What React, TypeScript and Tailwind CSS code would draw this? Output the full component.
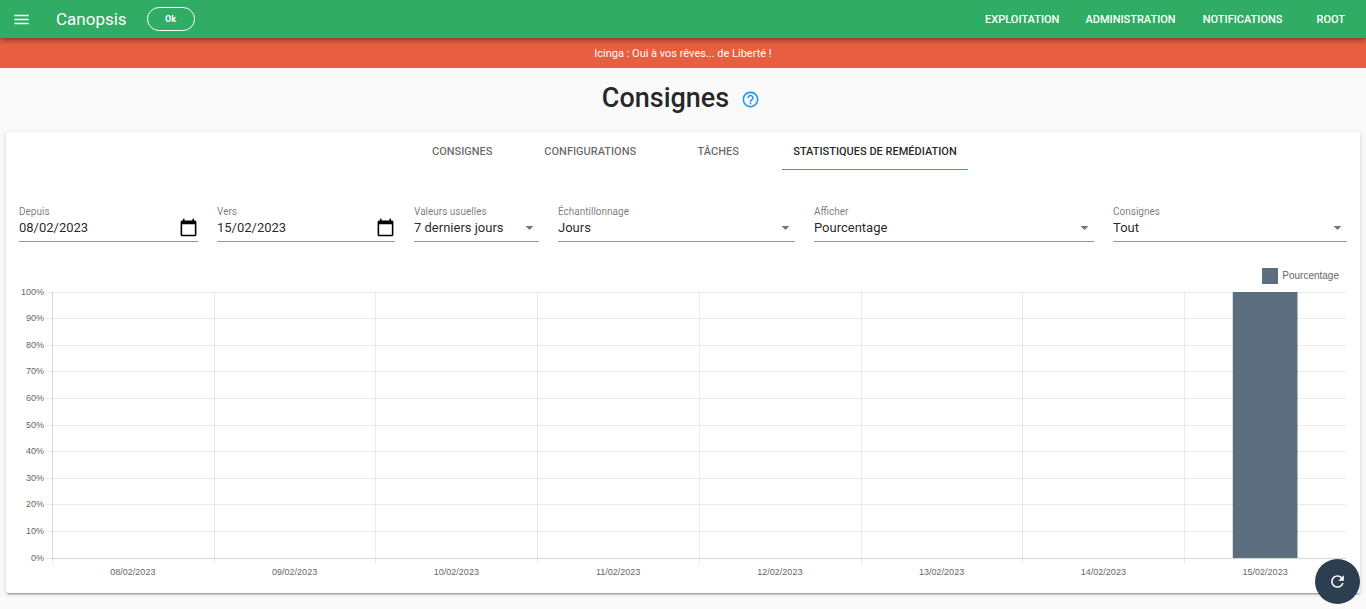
import { useLayoutEffect, useRef, useState } from "react";
import { MdArrowDropDown, MdCalendarToday, MdHelpOutline, MdMenu, MdRefresh } from "react-icons/md";

const NAV = [
  { label: "Exploitation", href: "#exploitation", className: "mr-[26px]" },
  { label: "Administration", href: "#administration", className: "mr-[27px]" },
  { label: "Notifications", href: "#notifications", className: "mr-[34px]" },
  { label: "Root", href: "#root", className: "mr-[21px]" },
];

const TABS = ["Consignes", "Configurations", "Tâches", "Statistiques de remédiation"];

const DATA = [
  { day: "08/02/2023", value: 0 },
  { day: "09/02/2023", value: 0 },
  { day: "10/02/2023", value: 0 },
  { day: "11/02/2023", value: 0 },
  { day: "12/02/2023", value: 0 },
  { day: "13/02/2023", value: 0 },
  { day: "14/02/2023", value: 0 },
  { day: "15/02/2023", value: 100 },
];

const LABEL = "text-[10px] leading-3 text-black/54";
const CONTROL =
  "h-5 w-full appearance-none bg-transparent text-[13px] leading-5 text-black/87 outline-none";

function DateField({ id, label, value }: { id: string; label: string; value: string }) {
  return (
    <div className="flex min-w-0 flex-col border-b border-[#949494] pb-[3px]">
      <label htmlFor={id} className={LABEL}>
        {label}
      </label>
      <div className="flex h-5 items-start">
        <input id={id} type="text" defaultValue={value} className={CONTROL} />
        <button type="button" aria-label={`Choisir : ${label}`} className="shrink-0 text-black">
          <MdCalendarToday className="size-[19px]" />
        </button>
      </div>
    </div>
  );
}

function SelectField({ id, label, options }: { id: string; label: string; options: string[] }) {
  return (
    <div className="flex min-w-0 flex-col border-b border-[#949494] pb-[3px]">
      <label htmlFor={id} className={LABEL}>
        {label}
      </label>
      <div className="grid items-start">
        <select id={id} className={`${CONTROL} col-start-1 row-start-1`}>
          {options.map((o) => (
            <option key={o}>{o}</option>
          ))}
        </select>
        <MdArrowDropDown className="pointer-events-none col-start-1 row-start-1 size-[19px] justify-self-end text-black/54" />
      </div>
    </div>
  );
}

function Chart() {
  const ref = useRef<HTMLDivElement>(null);
  const [width, setWidth] = useState(1328);

  useLayoutEffect(() => {
    const el = ref.current;
    if (!el) return;
    const update = () => setWidth(el.clientWidth);
    update();
    const observer = new ResizeObserver(update);
    observer.observe(el);
    return () => observer.disconnect();
  }, []);

  const left = 33;
  const right = width - 1;
  const top = 5;
  const bottom = 271;
  const step = (right - left) / DATA.length;
  const ticks = Array.from({ length: 11 }, (_, i) => 100 - i * 10);

  return (
    <div ref={ref} className="w-full">
      <svg
        width={width}
        height={294}
        role="img"
        aria-label="Pourcentage"
        className="block font-['Liberation_Sans',Arial,sans-serif] text-[9px]"
      >
        {ticks.map((t) => {
          const y = Math.floor(bottom - ((bottom - top) * t) / 100);
          return (
            <g key={t}>
              <rect
                x={left - 6}
                y={y}
                width={right - left + 6}
                height={1}
                fill="#000000"
                fillOpacity={0.08}
              />
              <text x={left - 8} y={y + 3} textAnchor="end" fill="#666666">
                {t}%
              </text>
            </g>
          );
        })}
        {Array.from({ length: DATA.length }, (_, i) => (
          <rect
            key={i}
            x={Math.ceil(left + i * step - 0.5)}
            y={top}
            width={1}
            height={bottom - top + 6}
            fill="#000000"
            fillOpacity={0.08}
          />
        ))}
        <rect x={left} y={top} width={1} height={bottom - top} fill="#000000" fillOpacity={0.08} />
        <rect x={left} y={bottom} width={right - left} height={1} fill="#000000" fillOpacity={0.08} />
        {DATA.map((d, i) => {
          const h = ((bottom - top) * d.value) / 100;
          return (
            <g key={d.day}>
              {h > 0 && (
                <rect
                  x={left + (i + 0.3) * step}
                  y={bottom - h}
                  width={step * 0.4}
                  height={h}
                  fill="#5c6d7e"
                />
              )}
              <text x={left + (i + 0.5) * step} y={288} textAnchor="middle" fill="#666666">
                {d.day}
              </text>
            </g>
          );
        })}
      </svg>
    </div>
  );
}

export default function App() {
  const [tab, setTab] = useState(3);

  return (
    <div className="flex min-h-screen flex-col bg-[#fafafa] font-[Roboto,sans-serif] text-black/87">
      <header className="relative z-10 flex h-[38px] items-center bg-[#30ac64] text-white shadow-[0_2px_4px_-1px_rgba(0,0,0,0.3),0_3px_5px_rgba(0,0,0,0.2)]">
        <button type="button" aria-label="Menu" className="ml-3">
          <MdMenu className="size-[19px]" />
        </button>
        <a href="#accueil" className="ml-[25px] text-[17px] leading-6">
          Canopsis
        </a>
        <button
          type="button"
          className="ml-5 h-6 w-12 rounded-full border border-white pt-px text-[9px] font-bold"
        >
          Ok
        </button>
        <nav className="ml-auto flex items-center pt-px">
          {NAV.map((n) => (
            <a
              key={n.label}
              href={n.href}
              className={`text-[11px] leading-4 font-medium uppercase ${n.className}`}
            >
              {n.label}
            </a>
          ))}
        </nav>
      </header>

      <p className="flex h-[30px] items-center justify-center bg-[#e85e40] pt-px text-[11px] leading-4 text-white">
        Icinga : Oui à vos rêves... de Liberté !
      </p>

      <div className="flex h-16 items-center justify-center gap-3 pr-1 pb-1">
        <h1 className="text-[27px] leading-9 font-medium">Consignes</h1>
        <button type="button" aria-label="Aide" className="mt-[3px] text-[#2196f3]">
          <MdHelpOutline className="size-[19px]" />
        </button>
      </div>

      <main className="mx-[6px] mb-4 rounded-xs bg-white px-[13px] pb-3 shadow-[0_3px_1px_-2px_rgba(0,0,0,0.2),0_2px_2px_rgba(0,0,0,0.14),0_1px_5px_rgba(0,0,0,0.12)]">
        <div role="tablist" className="flex h-[38px] justify-center">
          {TABS.map((t, i) => (
            <button
              key={t}
              type="button"
              role="tab"
              aria-selected={i === tab}
              onClick={() => setTab(i)}
              className={`min-w-32 border-b px-[11px] pt-[3px] text-[11px] font-medium uppercase ${
                i === tab ? "border-[#2fab63] text-black/87" : "border-transparent text-black/60"
              }`}
            >
              {t}
            </button>
          ))}
        </div>

        <form className="mt-9 grid grid-cols-[179fr_178fr_125fr_237fr_280fr_234fr] gap-[19px]">
          <DateField id="from" label="Depuis" value="08/02/2023" />
          <DateField id="to" label="Vers" value="15/02/2023" />
          <SelectField id="range" label="Valeurs usuelles" options={["7 derniers jours"]} />
          <SelectField id="sampling" label="Échantillonnage" options={["Jours"]} />
          <SelectField id="show" label="Afficher" options={["Pourcentage"]} />
          <SelectField id="instructions" label="Consignes" options={["Tout"]} />
        </form>

        <div className="mt-[26px] mr-2 flex h-4 items-center justify-end gap-1">
          <span className="size-4 bg-[#5c6d7e]" />
          <span className="font-['Liberation_Sans',Arial,sans-serif] text-[10px] leading-4 text-[#666666]">
            Pourcentage
          </span>
        </div>
        <div className="mt-[3px]">
          <Chart />
        </div>
      </main>

      <button
        type="button"
        aria-label="Rafraîchir"
        className="fixed right-[6px] bottom-[5px] z-20 flex size-[45px] items-center justify-center rounded-full bg-[#2c3e50] text-white"
      >
        <MdRefresh className="size-[19px]" />
      </button>
    </div>
  );
}
